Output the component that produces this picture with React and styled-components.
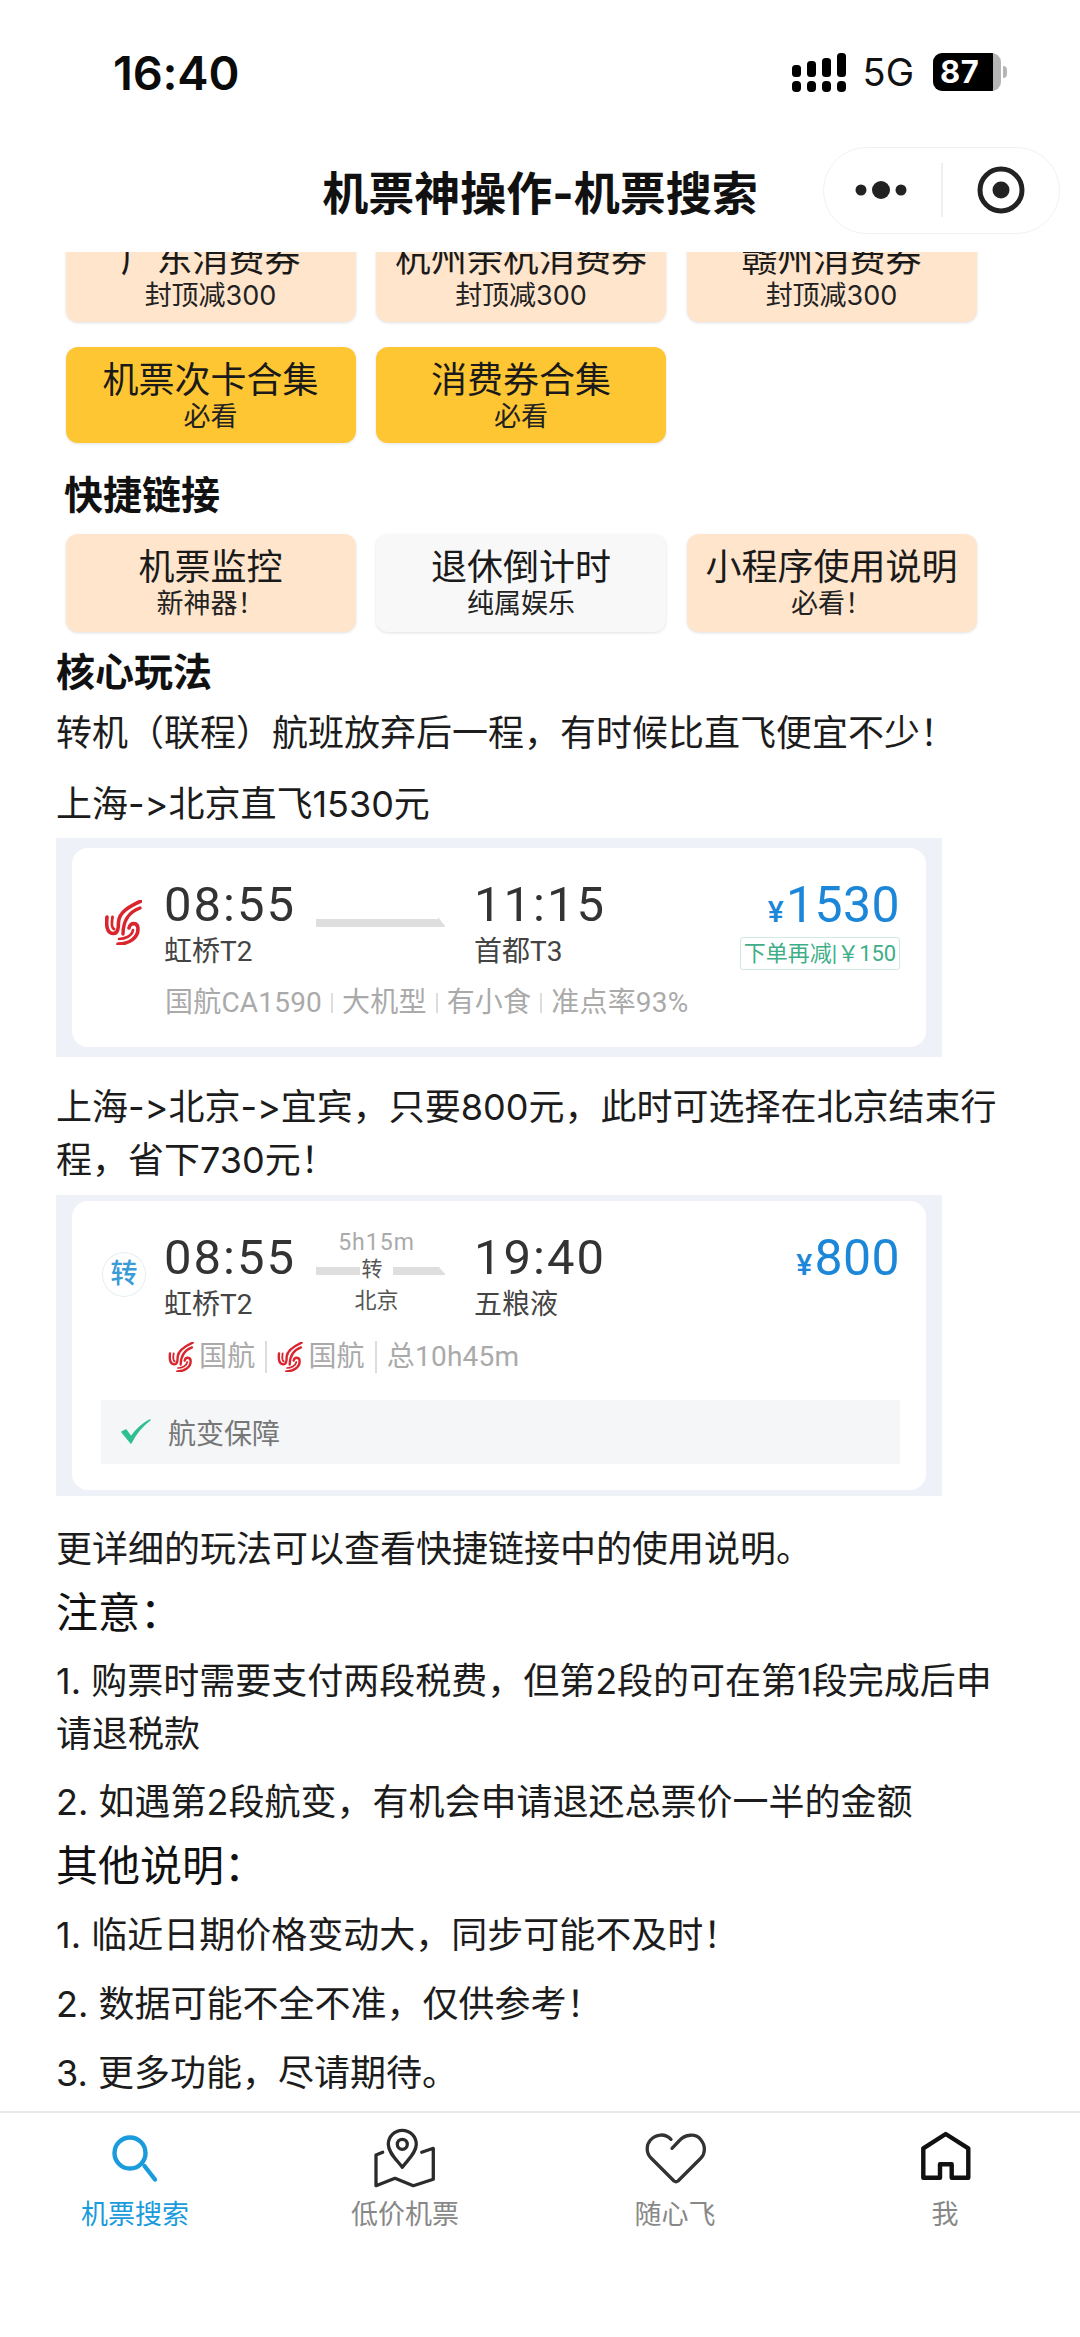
import React from 'react';
import styled, { createGlobalStyle } from 'styled-components';

const FONT = `Inter, "Noto Sans CJK SC", "Noto Sans", sans-serif`;
const FLIGHT_FONT = `Roboto, "Noto Sans CJK SC", sans-serif`;

const Global = createGlobalStyle`
  html, body { margin: 0; padding: 0; background: #fff; }
  body { font-family: ${FONT}; color: #1c1c1c; font-variant-ligatures: none; font-feature-settings: "calt" 0, "liga" 0; }
  * { box-sizing: border-box; }
`;

const Page = styled.div`
  width: 1080px; height: 2337px; display: flex; flex-direction: column;
  overflow: hidden; background: #fff;
`;
const StatusBar = styled.div`
  height: 144px; display: flex; align-items: center; justify-content: space-between;
  padding: 0 73px 0 113px; flex: none;
`;
const Clock = styled.div`font-size: 47px; font-weight: 600; color: #0b0b0b; letter-spacing: -0.2px;`;
const StatusRight = styled.div`display: flex; align-items: center;`;
const Net = styled.div`font-size: 38px; color: #111; margin: 0 19px 0 17px; line-height: 38px;`;
const Battery = styled.div`
  width: 68px; height: 38px; border-radius: 9px; color: #fff; font-size: 31px; font-weight: 700;
  background: linear-gradient(90deg, #000 0 60px, #b5b5b5 60px 100%);
  line-height: 38px; padding-left: 7px; letter-spacing: 0.5px;
`;
const BatteryNub = styled.div`
  width: 4px; height: 12px; margin-left: 2px; background: #b5b5b5; border-radius: 0 6px 6px 0;
`;

const NavBar = styled.div`
  height: 108px; flex: none; padding-bottom: 16px; padding-right: 20px;
  display: grid; grid-template-columns: 1fr auto 1fr; align-items: center; background: #fff;
`;
const NavTitle = styled.div`grid-column: 2; font-size: 46px; font-weight: 700; color: #111; padding-left: 20px; white-space: nowrap;`;
const Capsule = styled.div`
  grid-column: 3; justify-self: end; width: 237px; height: 87px; border-radius: 44px;
  border: 1px solid #f1f1f1; display: flex; align-items: center; background: #fff;
`;
const CapsuleSide = styled.div`
  flex: 1; display: flex; align-items: center; justify-content: center; height: 54px;
  ${p => p.$divider ? 'border-right: 2px solid #efefef;' : ''}
`;

const Scroll = styled.div`flex: 1; overflow: hidden; min-height: 0;`;
const Inner = styled.div`margin-top: -26px; padding-left: 56px;`;

const ButtonGrid = styled.div`
  display: grid; grid-template-columns: repeat(3, 290px); column-gap: 20.5px; row-gap: 25px;
  margin-left: 9.5px; margin-top: ${p => p.$top || 0}px; grid-auto-rows: ${p => p.$rowH}px;
`;
const Btn = styled.div`
  border-radius: 12px; padding-top: 14px; text-align: center;
  background: ${p => p.$kind === 'hot' ? '#ffc633' : p.$kind === 'plain' ? '#f8f8f8' : '#ffe5cc'};
  box-shadow: 0 1px 3px rgba(0,0,0,.12);
`;
const BtnTitle = styled.div`font-size: 36px; line-height: 39px; color: #1a1a1a;`;
const BtnSub = styled.div`font-size: 27px; line-height: 34px; color: #222;`;

const SectionTitle = styled.div`
  font-size: 39px; font-weight: 700; line-height: 50px; color: #111;
  margin-top: ${p => p.$top}px; margin-left: ${p => p.$left || 0}px;
`;
const Para = styled.div`
  font-size: 36px; line-height: 53px; color: #1c1c1c; white-space: nowrap;
  margin-top: ${p => p.$top}px;
`;
const BigNote = styled.div`font-size: 42px; line-height: 56px; color: #111; margin-top: ${p => p.$top}px;`;

const Shot = styled.div`
  width: 886px; background: #eef1f8; padding: ${p => p.$pad}px 16px; margin-top: ${p => p.$top}px;
`;
const Card = styled.div`
  background: #fff; border-radius: 16px; padding: 32px 26px ${p => p.$bottom}px 30px;
  font-family: ${FLIGHT_FONT};
`;
const FlightGrid = styled.div`
  display: grid; grid-template-columns: 62px 152px 158px 1fr auto; grid-template-rows: 48px 42px;
`;
const LogoCell = styled.div`grid-column: 1; grid-row: 1 / 3; padding-top: ${p => p.$top}px; padding-left: ${p => p.$left || 0}px;`;
const Time = styled.div`font-size: 49px; height: 48px; line-height: 50px; color: #333; letter-spacing: 2px;`;
const Port = styled.div`font-size: 28px; line-height: 36px; color: #444; margin-top: 6px;`;
const ArrivalCell = styled.div`grid-column: 4;`;
const Route = styled.div`
  grid-column: 3; grid-row: 1 / 3; width: 129px; display: flex; flex-direction: column; align-items: center;
  padding-top: ${p => p.$top}px;
`;
const Duration = styled.div`font-size: 23px; line-height: 20px; color: #aaa; letter-spacing: 1px; margin-right: 8px;`;
const RouteLine = styled.div`width: 100%; height: 24px; margin-top: 4px; display: flex; align-items: center; justify-content: space-between;`;
const LineBar = styled.div`width: ${p => p.$w}px; height: 8px; background: #dedede; margin-top: 4px;`;
const Transfer = styled.div`font-size: 21px; line-height: 24px; color: #555; margin-right: 9px;`;
const Via = styled.div`font-size: 22px; line-height: 28px; color: #555; margin-top: 6px; margin-right: 8px;`;
const PriceCell = styled.div`grid-column: 5; grid-row: 1 / 3; display: flex; flex-direction: column; align-items: flex-end;`;
const Price = styled.div`font-size: 50px; height: 48px; line-height: 50px; color: #1c87d8; letter-spacing: 0.4px;`;
const Yen = styled.span`font-size: 30px; margin-right: 2px; font-weight: 500;`;
const Tag = styled.div`
  margin-top: 9px; height: 33px; width: 160px; border: 1px solid #cfeadf; border-radius: 3px;
  font-size: 22px; line-height: 31px; color: #3fae88; text-align: center; white-space: nowrap;
`;
const Meta = styled.div`
  font-size: 28px; line-height: 36px; color: #aaa; display: flex; align-items: center;
  margin-top: ${p => p.$top}px; padding-left: ${p => p.$left}px; letter-spacing: 0.2px;
`;
const Sep = styled.span`
  width: 2px; height: ${p => p.$h || 20}px; background: #ddd; margin: 0 ${p => p.$gap || 9}px;
`;
const MiniLogo = styled.span`display: inline-flex; margin-right: 5px;`;
const TransferBadge = styled.div`
  width: 44px; height: 45px; border-radius: 50%; border: 1px solid #e4eef4; color: #3a9bd6;
  font-size: 27px; font-weight: 500; line-height: 43px; text-align: center;
`;
const Guarantee = styled.div`
  margin: 25px 0 0 -1px; height: 64px; background: #f5f6f7; display: flex; align-items: center;
  padding-left: 19px; font-size: 28px; color: #777; gap: 16px;
`;

const TabBar = styled.div`
  flex: none; height: 226px; border-top: 2px solid #e9e9e9; background: #fff;
  display: grid; grid-template-columns: repeat(4, 270px); padding-top: 12px; align-content: start;
`;
const Tab = styled.div`display: flex; flex-direction: column; align-items: center;`;
const TabLabel = styled.div`font-size: 27px; line-height: 40px; color: ${p => p.$active ? '#1a9bdb' : '#888'};`;

const Phoenix = ({ w = 37, h = 45 }) => (
  <svg width={w} height={h} viewBox="0 0 37 45" fill="none" stroke="#d9252e" strokeLinecap="round">
    <path d="M2 17C1 26 2 33 8 33.5C13 34 13.5 28 13.5 22C14 12 25 6 36 1" strokeWidth="3.6" />
    <path d="M7.5 17C6.5 23 7 28 9 29" strokeWidth="2.8" />
    <path d="M18 34C18 20 24 12 35 8" strokeWidth="3.4" />
    <path d="M13 44C24 44 33 38 33 29C33 22 25 22 24 28" strokeWidth="3.6" />
    <path d="M14 39C20 39 27 36 28 30" strokeWidth="2.6" />
  </svg>
);

const Signal = () => (
  <svg width="54" height="39" viewBox="0 0 54 39" fill="#000">
    {[0, 15, 30, 45].map((x, i) => (
      <g key={x}>
        <rect x={x} y={[12, 8, 5, 0][i]} width="9" height={[12, 16, 19, 24][i]} rx="3.5" />
        <rect x={x} y="28" width="9" height="11" rx="4" />
      </g>
    ))}
  </svg>
);

const Dots = () => (
  <svg width="54" height="20" viewBox="0 0 54 20" fill="#222">
    <circle cx="6" cy="10" r="5.5" /><circle cx="26" cy="10" r="9" /><circle cx="46" cy="10" r="5.5" />
  </svg>
);
const Target = () => (
  <svg width="48" height="48" viewBox="0 0 48 48" fill="none">
    <circle cx="24" cy="24" r="21" stroke="#222" strokeWidth="5" />
    <circle cx="24" cy="24" r="8.5" fill="#222" />
  </svg>
);
const Arrow = () => (
  <svg width="129" height="10" viewBox="0 0 129 10" fill="#dedede">
    <polygon points="0,2 122,2 122,0 129,9 129,10 0,10" />
  </svg>
);
const ArrowEnd = () => (
  <svg width="52" height="8" viewBox="0 0 52 8" fill="#dedede" style={{ marginTop: 4 }}>
    <polygon points="0,0 46,0 52,7 52,8 0,8" />
  </svg>
);
const Check = () => (
  <svg width="32" height="28" viewBox="0 0 32 28" fill="none">
    <path d="M2 14L11 25C16 15 22 8 30 2C22 6 16 12 11 19L6 12Z" fill="#2fbf8f" stroke="#2fbf8f" strokeWidth="1.5" strokeLinejoin="round" />
  </svg>
);

const SearchIcon = () => (
  <svg width="80" height="70" viewBox="-5 0 80 70" fill="none" stroke="#1a9bdb" strokeWidth="4.4" strokeLinecap="round">
    <circle cx="30" cy="28" r="15.5" />
    <path d="M44.5 41L55 54.5" />
  </svg>
);
const MapIcon = () => (
  <svg width="80" height="70" viewBox="-5 0 80 70" fill="none" stroke="#2b2b2b" strokeWidth="3.3" strokeLinecap="round" strokeLinejoin="round">
    <path d="M32.3 42.3C27 35 18.3 28 18.3 19.3a14 14 0 0 1 28 0C46.3 28 37.5 35 32.3 42.3Z" />
    <circle cx="32.3" cy="19.3" r="5" />
    <path d="M12.7 27.3L6 30V60.7L25 53.3L43.3 60.7L63.3 54.3V23.3L51.7 27.3" />
  </svg>
);
const HeartIcon = () => (
  <svg width="80" height="70" viewBox="-6 -3 80 70" fill="none" stroke="#333" strokeWidth="3.3" strokeLinecap="round" strokeLinejoin="round">
    <path d="M31 20.3L38 13C44 6 55 5 60 12C65 18 64 26 60 30L37 53Q35 54.5 33 53L10 30C5 25 5 17 9.5 12C15 6 24 5 30 11.3" />
  </svg>
);
const HomeIcon = () => (
  <svg width="80" height="70" viewBox="0 0 80 70" fill="none" stroke="#111" strokeWidth="4.4" strokeLinejoin="round">
    <path d="M40.7 9L63.3 23.3V52.7H46.7V39.3H35V52.7H18.3V23.3Z" />
  </svg>
);

const topButtons = [
  { t: '广东消费券', s: '封顶减300' },
  { t: '杭州余杭消费券', s: '封顶减300' },
  { t: '赣州消费券', s: '封顶减300' },
  { t: '机票次卡合集', s: '必看', k: 'hot' },
  { t: '消费券合集', s: '必看', k: 'hot' },
];
const linkButtons = [
  { t: '机票监控', s: '新神器！' },
  { t: '退休倒计时', s: '纯属娱乐', k: 'plain' },
  { t: '小程序使用说明', s: '必看！' },
];
const tabs = [
  { label: '机票搜索', Icon: SearchIcon, active: true },
  { label: '低价机票', Icon: MapIcon },
  { label: '随心飞', Icon: HeartIcon },
  { label: '我', Icon: HomeIcon },
];

const Buttons = ({ items, rowH, top }) => (
  <ButtonGrid $rowH={rowH} $top={top}>
    {items.map(b => (
      <Btn key={b.t} $kind={b.k}>
        <BtnTitle>{b.t}</BtnTitle>
        <BtnSub>{b.s}</BtnSub>
      </Btn>
    ))}
  </ButtonGrid>
);

export default function App() {
  return (
    <Page>
      <Global />
      <StatusBar>
        <Clock>16:40</Clock>
        <StatusRight>
          <Signal />
          <Net>5G</Net>
          <Battery>87</Battery>
          <BatteryNub />
        </StatusRight>
      </StatusBar>
      <NavBar>
        <NavTitle>机票神操作-机票搜索</NavTitle>
        <Capsule>
          <CapsuleSide $divider><Dots /></CapsuleSide>
          <CapsuleSide><Target /></CapsuleSide>
        </Capsule>
      </NavBar>

      <Scroll>
        <Inner>
          <Buttons items={topButtons} rowH={96} />
          <SectionTitle $top={27} $left={8}>快捷链接</SectionTitle>
          <Buttons items={linkButtons} rowH={98} top={14} />
          <SectionTitle $top={15}>核心玩法</SectionTitle>
          <Para $top={10}>转机（联程）航班放弃后一程，有时候比直飞便宜不少！</Para>
          <Para $top={18}>上海-&gt;北京直飞1530元</Para>

          <Shot $pad={10} $top={7}>
            <Card $bottom={26}>
              <FlightGrid>
                <LogoCell $top={20} $left={3}><Phoenix /></LogoCell>
                <div>
                  <Time>08:55</Time>
                  <Port>虹桥T2</Port>
                </div>
                <Route $top={37}><Arrow /></Route>
                <ArrivalCell>
                  <Time>11:15</Time>
                  <Port>首都T3</Port>
                </ArrivalCell>
                <PriceCell>
                  <Price><Yen>¥</Yen>1530</Price>
                  <Tag>下单再减|￥150</Tag>
                </PriceCell>
              </FlightGrid>
              <Meta $top={15} $left={63}>
                国航CA1590<Sep />大机型<Sep />有小食<Sep />准点率93%
              </Meta>
            </Card>
          </Shot>

          <Para $top={24}>上海-&gt;北京-&gt;宜宾，只要800元，此时可选择在北京结束行<br />程，省下730元！</Para>

          <Shot $pad={6} $top={8}>
            <Card $bottom={26}>
              <FlightGrid>
                <LogoCell $top={19}><TransferBadge>转</TransferBadge></LogoCell>
                <div>
                  <Time>08:55</Time>
                  <Port>虹桥T2</Port>
                </div>
                <Route $top={0}>
                  <Duration>5h15m</Duration>
                  <RouteLine>
                    <LineBar $w={44} />
                    <Transfer>转</Transfer>
                    <ArrowEnd />
                  </RouteLine>
                  <Via>北京</Via>
                </Route>
                <ArrivalCell>
                  <Time>19:40</Time>
                  <Port>五粮液</Port>
                </ArrivalCell>
                <PriceCell>
                  <Price><Yen>¥</Yen>800</Price>
                </PriceCell>
              </FlightGrid>
              <Meta $top={16} $left={66}>
                <MiniLogo><Phoenix w={26} h={30} /></MiniLogo>国航<Sep $h={32} $gap={10} />
                <MiniLogo><Phoenix w={26} h={30} /></MiniLogo>国航<Sep $h={32} $gap={10} />总10h45m
              </Meta>
              <Guarantee><Check />航变保障</Guarantee>
            </Card>
          </Shot>

          <Para $top={27}>更详细的玩法可以查看快捷链接中的使用说明。</Para>
          <BigNote $top={9}>注意：</BigNote>
          <Para $top={14}>1. 购票时需要支付两段税费，但第2段的可在第1段完成后申<br />请退税款</Para>
          <Para $top={15}>2. 如遇第2段航变，有机会申请退还总票价一半的金额</Para>
          <BigNote $top={9}>其他说明：</BigNote>
          <Para $top={15}>1. 临近日期价格变动大，同步可能不及时！</Para>
          <Para $top={16}>2. 数据可能不全不准，仅供参考！</Para>
          <Para $top={16}>3. 更多功能，尽请期待。</Para>
        </Inner>
      </Scroll>

      <TabBar>
        {tabs.map(({ label, Icon, active }) => (
          <Tab key={label}>
            <Icon />
            <TabLabel $active={active}>{label}</TabLabel>
          </Tab>
        ))}
      </TabBar>
    </Page>
  );
}
